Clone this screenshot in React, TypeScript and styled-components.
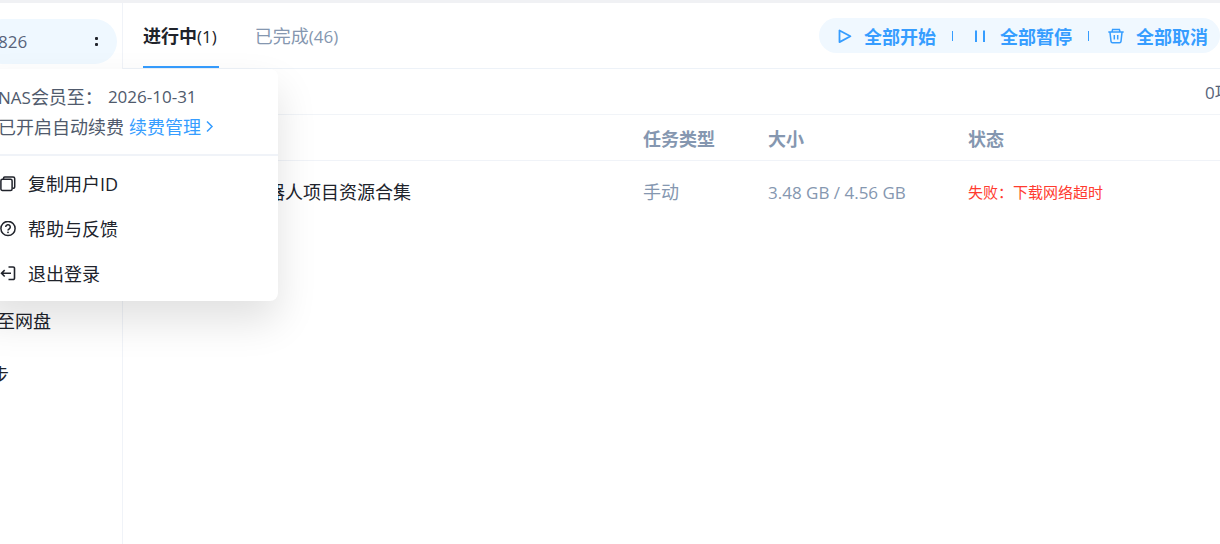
import React from 'react';
import styled, { createGlobalStyle, css } from 'styled-components';

const GlobalStyle = createGlobalStyle`
  *, *::before, *::after { box-sizing: border-box; }
  body {
    margin: 0;
    background: #fff;
    color: #20232b;
    font-family: "Open Sans", "Noto Sans CJK SC", sans-serif;
    font-size: 18px;
    font-weight: 400;
    line-height: 24px;
  }
  button {
    margin: 0;
    padding: 0;
    border: 0;
    background: none;
    color: inherit;
    font: inherit;
    cursor: pointer;
  }
`;

const Page = styled.div`
  display: flex;
  min-height: 100vh;
  overflow: hidden;
  border-top: 3px solid #f0f1f4;
`;

const Sidebar = styled.aside`
  flex: 0 0 123px;
  min-width: 0;
  padding-top: 16px;
  border-right: 1px solid #f0f3f8;
`;

const Account = styled.div`
  position: relative;
`;

const AccountCard = styled.div`
  display: flex;
  align-items: center;
  justify-content: space-between;
  height: 45px;
  margin: 0 5px 0 -20px;
  padding: 0 12px 0 18px;
  border-radius: 23px;
  background: #eff8ff;
  color: #58637a;
`;

const MoreButton = styled.button`
  display: flex;
  padding: 4px;
`;

const Latin = styled.span`
  font-size: 17px;
`;

const Popup = styled.div`
  position: absolute;
  z-index: 2;
  top: 50px;
  left: -20px;
  width: 298px;
  border-radius: 0 8px 8px 0;
  background: #fff;
  box-shadow: 0 20px 40px rgba(0, 0, 0, 0.12);
  white-space: nowrap;
`;

const Membership = styled.div`
  padding: 13px 18px 12px;
  border-bottom: 2px solid #f0f3f8;
  color: #505a6c;
  line-height: 30px;
`;

const MembershipLine = styled.div`
  display: flex;
  align-items: center;
  gap: 5px;
  height: 30px;
`;

const RenewLink = styled.a`
  display: flex;
  align-items: center;
  gap: 4px;
  color: #369dff;
  text-decoration: none;
`;

const Menu = styled.div`
  display: flex;
  flex-direction: column;
  padding: 5px 0;
`;

const MenuItem = styled.button`
  display: flex;
  align-items: center;
  gap: 12px;
  height: 45px;
  padding: 0 20px;
`;

const Nav = styled.nav`
  display: flex;
  flex-direction: column;
  padding-top: 230px;
`;

const NavLink = styled.a`
  display: flex;
  align-items: center;
  justify-content: flex-end;
  height: 54px;
  color: inherit;
  text-decoration: none;
  white-space: nowrap;
`;

const NavLabel = styled.span<{ $inset: number }>`
  margin-right: ${({ $inset }) => $inset}px;
`;

const Main = styled.main`
  flex: 1;
  min-width: 0;
`;

const Header = styled.header`
  display: flex;
  justify-content: space-between;
  height: 66px;
  border-bottom: 1px solid #edf2f8;
`;

const Tabs = styled.div`
  display: flex;
  gap: 36px;
  padding-left: 20px;
`;

const Tab = styled.button<{ $active?: boolean }>`
  padding: 4px 0 0;
  border-bottom: 2px solid transparent;
  color: #8597b0;
  white-space: nowrap;
  ${({ $active }) =>
    $active &&
    css`
      padding-right: 2px;
      border-color: #369dff;
      color: #20232b;
      font-weight: 700;
    `}
`;

const Count = styled(Latin)<{ $strong?: boolean }>`
  font-weight: ${({ $strong }) => ($strong ? 500 : 400)};
`;

const Toolbar = styled.div`
  display: flex;
  align-items: center;
  height: 35px;
  margin-top: 15px;
  padding: 0 12px 0 17px;
  border-radius: 18px;
  background: #f0f8ff;
  color: #369dff;
`;

const ToolButton = styled.button`
  display: flex;
  align-items: center;
  gap: 12px;
  font-weight: 700;
  white-space: nowrap;
`;

const ToolLabel = styled.span`
  padding-top: 2px;
`;

const Separator = styled.span`
  width: 1px;
  height: 10px;
  margin: 0 19px 0 16px;
  background: #369dff;
`;

const Summary = styled.div`
  display: flex;
  justify-content: flex-end;
  align-items: center;
  height: 46px;
  padding-top: 2px;
  overflow: hidden;
  border-bottom: 1px solid #f1f4f8;
  color: #58637a;
`;

const SummaryCount = styled.span`
  flex: 0 0 15px;
  min-width: 0;
  white-space: nowrap;
`;

const Table = styled.table`
  width: 100%;
  border-collapse: separate;
  border-spacing: 0;
  table-layout: fixed;
  color: #8597b0;
  text-align: left;
`;

const HeadCell = styled.th<{ $width?: number }>`
  width: ${({ $width }) => ($width ? `${$width}px` : 'auto')};
  height: 46px;
  padding: 2px 0 0;
  border-bottom: 1px solid #f0f3f8;
  font-weight: 700;
`;

const Cell = styled.td`
  height: 62px;
  padding: 0;
  white-space: nowrap;
`;

const NameCell = styled(Cell)`
  padding-left: 144px;
  color: #20232b;
`;

const Failure = styled.div`
  color: #ff3b30;
  font-size: 15px;
`;

const Icon = styled.svg.attrs({ fill: 'none', stroke: 'currentColor', 'aria-hidden': true })`
  display: block;
  flex: none;
`;

const MoreIcon = () => (
  <Icon width="9" height="16" viewBox="0 0 9 16">
    <g fill="#20232b" stroke="none">
      <rect x="3" y="3" width="3" height="3" rx="1" />
      <rect x="3" y="9" width="3" height="3" rx="1" />
    </g>
  </Icon>
);

const ChevronIcon = () => (
  <Icon width="10" height="14" viewBox="0 0 10 14" strokeWidth="1.5">
    <path d="M2 1.500 7 6.500l-5 5" />
  </Icon>
);

const CopyIcon = () => (
  <Icon width="16" height="16" viewBox="0 0 16 16" strokeWidth="1.5">
    <rect x="0.900" y="3.200" width="11.200" height="11.200" rx="1.500" />
    <path d="M3.500 3V2.200C3.500 1.500 4 1 4.700 1h8.400c.9 0 1.600.7 1.600 1.600v8.400c0 .7-.5 1.200-1.200 1.200h-1" />
  </Icon>
);

const HelpIcon = () => (
  <Icon width="16" height="16" viewBox="0 0 16 16" strokeWidth="1.500">
    <circle cx="8" cy="7.500" r="7.100" />
    <path d="M5.700 6a2.300 2.300 0 1 1 3.400 2C8.300 8.400 8 8.700 8 9.500" />
    <circle cx="8" cy="11.300" r="0.900" fill="currentColor" stroke="none" />
  </Icon>
);

const LogoutIcon = () => (
  <Icon width="16" height="16" viewBox="0 0 16 16" strokeWidth="1.600">
    <path d="M8.500 1h4.700a1.300 1.300 0 0 1 1.300 1.300v9.900a1.300 1.300 0 0 1-1.300 1.300H8.500M11 7.300H1.700M4.700 4.100 1.500 7.300l3.200 3.200" />
  </Icon>
);

const PlayIcon = () => (
  <Icon width="16" height="16" viewBox="0 0 16 16" strokeWidth="1.800" strokeLinejoin="round">
    <path d="M3.500 2.500v11.600L14.400 8.300z" />
  </Icon>
);

const PauseIcon = () => (
  <Icon width="16" height="16" viewBox="0 0 16 16" strokeWidth="2">
    <path d="M4 2.500v11.500M12 2.500v11.500" />
  </Icon>
);

const TrashIcon = () => (
  <Icon width="16" height="16" viewBox="0 0 16 16" strokeWidth="1.500">
    <path d="M.3 4h15.400M4 3.800l.6-2.200h6.800l.6 2.200M2 4.300l1 9c.1.900.7 1.400 1.500 1.400h7c.8 0 1.400-.5 1.500-1.400l1-9M6.300 7v4.500M9.700 7v4.500" />
  </Icon>
);

const menuItems = [
  { label: '复制用户ID', icon: <CopyIcon /> },
  { label: '帮助与反馈', icon: <HelpIcon /> },
  { label: '退出登录', icon: <LogoutIcon /> },
];

const tools = [
  { label: '全部开始', icon: <PlayIcon /> },
  { label: '全部暂停', icon: <PauseIcon /> },
  { label: '全部取消', icon: <TrashIcon /> },
];

export default function App() {
  return (
    <>
      <GlobalStyle />
      <Page>
        <Sidebar>
          <Account>
            <AccountCard>
              <Latin>826</Latin>
              <MoreButton type="button">
                <MoreIcon />
              </MoreButton>
            </AccountCard>
            <Popup>
              <Membership>
                <MembershipLine>
                  <span>
                    <Latin>NAS</Latin>会员至：
                  </span>
                  <Latin>2026-10-31</Latin>
                </MembershipLine>
                <MembershipLine>
                  已开启自动续费
                  <RenewLink href="#renew">
                    续费管理
                    <ChevronIcon />
                  </RenewLink>
                </MembershipLine>
              </Membership>
              <Menu>
                {menuItems.map((item) => (
                  <MenuItem type="button" key={item.label}>
                    {item.icon}
                    {item.label}
                  </MenuItem>
                ))}
              </Menu>
            </Popup>
          </Account>
          <Nav>
            <NavLink href="#cloud">
              <NavLabel $inset={71}>至网盘</NavLabel>
            </NavLink>
            <NavLink href="#sync">
              <NavLabel $inset={113}>步</NavLabel>
            </NavLink>
          </Nav>
        </Sidebar>
        <Main>
          <Header>
            <Tabs>
              <Tab type="button" $active>
                进行中<Count $strong>(1)</Count>
              </Tab>
              <Tab type="button">
                已完成<Count>(46)</Count>
              </Tab>
            </Tabs>
            <Toolbar>
              {tools.map((tool, index) => (
                <React.Fragment key={tool.label}>
                  {index > 0 && <Separator />}
                  <ToolButton type="button">
                    {tool.icon}
                    <ToolLabel>{tool.label}</ToolLabel>
                  </ToolButton>
                </React.Fragment>
              ))}
            </Toolbar>
          </Header>
          <Summary>
            <SummaryCount>
              <Latin>0</Latin>项
            </SummaryCount>
          </Summary>
          <Table>
            <thead>
              <tr>
                <HeadCell $width={520} />
                <HeadCell $width={125}>任务类型</HeadCell>
                <HeadCell $width={200}>大小</HeadCell>
                <HeadCell>状态</HeadCell>
              </tr>
            </thead>
            <tbody>
              <tr>
                <NameCell>器人项目资源合集</NameCell>
                <Cell>手动</Cell>
                <Cell>
                  <Latin>3.48 GB / 4.56 GB</Latin>
                </Cell>
                <Cell>
                  <Failure>失败：下载网络超时</Failure>
                </Cell>
              </tr>
            </tbody>
          </Table>
        </Main>
      </Page>
    </>
  );
}
